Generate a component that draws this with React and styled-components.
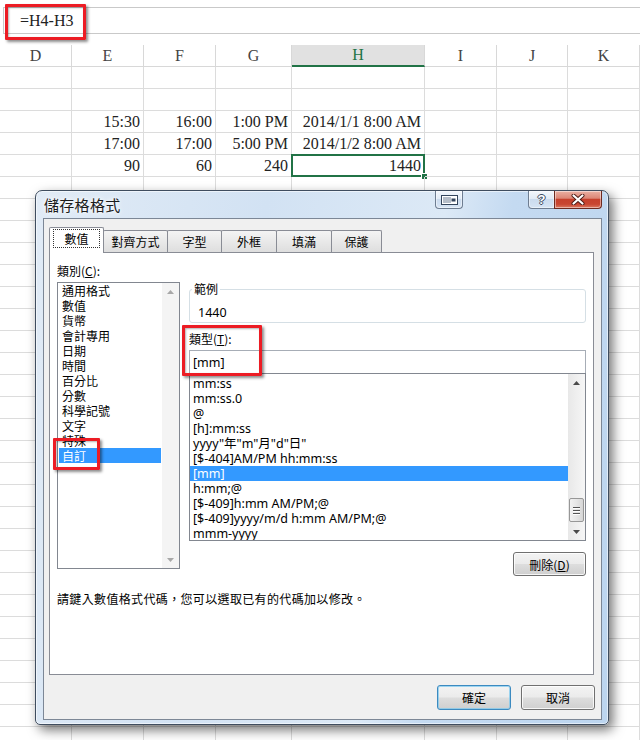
import React from 'react';
import styled, { createGlobalStyle } from 'styled-components';

const CJK = `"Noto Sans CJK TC", "Noto Sans", sans-serif`;
const LATIN = `"Noto Sans", "Noto Sans CJK TC", sans-serif`;
const SERIF = `"Liberation Serif", "Times New Roman", serif`;

const Global = createGlobalStyle`
  html, body { margin: 0; padding: 0; background: #fff; }
  body { width: 640px; height: 740px; overflow: hidden; }
`;

const Page = styled.div`
  position: relative;
  width: 640px;
  height: 740px;
  overflow: hidden;
  background: #fff;
`;

/* ---------- spreadsheet ---------- */
const FormulaBar = styled.div`
  margin: 7px 0 0 3px;
  height: 27px;
  box-sizing: border-box;
  border-top: 1px solid #c9c9c9;
  border-bottom: 1px solid #c9c9c9;
  border-left: 1px solid #c9c9c9;
  display: flex;
  align-items: center;
  padding-left: 16px;
  font-family: ${SERIF};
  font-size: 16px;
  color: #222;
`;

const Sheet = styled.div`
  margin-top: 11px;
  display: grid;
  grid-template-columns: 72px 72px 72px 76px 133px 72px 71px 72px;
  grid-auto-rows: 22px;
  font-family: ${SERIF};
  font-size: 16px;
`;

const HeadCell = styled.div`
  box-sizing: border-box;
  border-right: 1px solid #d8d8d8;
  border-bottom: ${p => (p.$active ? '2px solid #217346' : '1px solid #d8d8d8')};
  background: ${p => (p.$active ? '#e1e1e1' : '#fff')};
  color: ${p => (p.$active ? '#217346' : '#444')};
  display: flex;
  align-items: center;
  justify-content: center;
`;

const Cell = styled.div`
  position: relative;
  box-sizing: border-box;
  border-right: 1px solid #dcdcdc;
  border-bottom: 1px solid #dcdcdc;
  text-align: right;
  padding-right: 3px;
  line-height: 21px;
  color: #222;
  white-space: nowrap;
  ${p =>
    p.$selected &&
    `
    &::before {
      content: '';
      position: absolute;
      left: -1px; top: -1px; right: -1px; bottom: -1px;
      border: 2px solid #217346;
    }
    &::after {
      content: '';
      position: absolute;
      right: -4px; bottom: -4px;
      width: 5px; height: 5px;
      background: #217346;
      border: 1px solid #fff;
    }
  `}
`;

/* ---------- dialog ---------- */
const Dialog = styled.div`
  position: absolute;
  left: 35px;
  top: 190px;
  width: 574px;
  height: 535px;
  box-sizing: border-box;
  z-index: 2;
  border: 1px solid #3f4d5f;
  border-radius: 7px 7px 5px 5px;
  background: linear-gradient(100deg, #e1ebf6 0%, #d2e2f3 35%, #dce9f6 62%, #c4daf1 72%, #bcd5ef 100%);
  box-shadow: 4px 5px 12px rgba(0, 0, 0, 0.55), inset 0 0 0 1px rgba(255, 255, 255, 0.55);
  padding: 0 6px 4px 7px;
  display: flex;
  flex-direction: column;
`;

const TitleBar = styled.div`
  height: 27px;
  display: flex;
  align-items: flex-start;
`;

const Title = styled.div`
  padding-left: 1px;
  line-height: 27px;
  font-family: ${CJK};
  font-size: 15px;
  letter-spacing: 0.3px;
  color: #1b1b1b;
  text-shadow: 0 0 6px #fff, 0 0 3px #fff;
`;

const CapButtons = styled.div`
  margin-left: auto;
  display: flex;
  align-items: flex-start;
`;

const CapBtn = styled.div`
  box-sizing: border-box;
  width: ${p => p.$w}px;
  height: 18px;
  margin-left: ${p => p.$ml || 0}px;
  display: flex;
  align-items: center;
  justify-content: center;
  border: 1px solid ${p => (p.$close ? '#6d2a20' : '#6e7d91')};
  border-top: none;
  border-radius: ${p => p.$r};
  background: ${p =>
    p.$close
      ? 'linear-gradient(#eab0a3 0%, #dc8676 42%, #c6402c 50%, #c84631 78%, #dc7a62 100%)'
      : 'linear-gradient(#f3f7fc 0%, #e1ebf6 45%, #cbdbee 50%, #d6e4f4 100%)'};
  box-shadow: inset 0 0 0 1px rgba(255, 255, 255, 0.45);
`;

const HelpGlyph = styled.span`
  font-family: "Liberation Sans", sans-serif;
  font-weight: bold;
  font-size: 13px;
  color: #fff;
  text-shadow: 1px 0 #3a4b63, -1px 0 #3a4b63, 0 1px #3a4b63, 0 -1px #3a4b63;
`;

const Client = styled.div`
  flex: 1;
  box-sizing: border-box;
  border: 1px solid #7c8796;
  background: #f0f0f0;
  padding: 8px 7px 0 5px;
  display: flex;
  flex-direction: column;
`;

const TabRow = styled.div`
  height: 25px;
  display: flex;
  align-items: flex-end;
  font-family: ${CJK};
  font-size: 12px;
  color: #000;
`;

const Tab = styled.div`
  box-sizing: border-box;
  width: ${p => p.$w}px;
  height: ${p => (p.$active ? 26 : 22)}px;
  margin-left: ${p => (p.$first ? 0 : -1)}px;
  margin-bottom: ${p => (p.$active ? -1 : 0)}px;
  position: relative;
  z-index: ${p => (p.$active ? 1 : 0)};
  border: 1px solid #898c95;
  border-bottom: none;
  border-radius: 2px 2px 0 0;
  background: ${p => (p.$active ? '#fff' : 'linear-gradient(#f4f4f4, #e9e9e9 50%, #dedede)')};
  display: flex;
  align-items: center;
  justify-content: center;
  padding: ${p => (p.$active ? '0 3px 4px' : '0')};
  line-height: 15px;
`;

const FocusBox = styled.div`
  flex: 1;
  box-sizing: border-box;
  border: 1px dotted #333;
  padding: 1px 0;
  text-align: center;
`;

const Panel = styled.div`
  height: 423px;
  box-sizing: border-box;
  border: 1px solid #898c95;
  background: #fff;
  padding: 10px 7px 0 7px;
  font-family: ${CJK};
  font-size: 12px;
  color: #000;
`;

const PanelGrid = styled.div`
  display: grid;
  grid-template-columns: 123px 397px;
  column-gap: 9px;
`;

const Column = styled.div`
  display: flex;
  flex-direction: column;
`;

const Label = styled.div`
  line-height: 15px;
  margin-top: ${p => p.$mt || 0}px;
`;

const U = styled.span`
  text-decoration: underline;
  text-underline-offset: 1px;
`;

const ListBox = styled.div`
  margin-top: ${p => p.$mt || 0}px;
  height: ${p => p.$h}px;
  box-sizing: border-box;
  border: 1px solid #828790;
  background: #fff;
  display: flex;
  overflow: hidden;
`;

const Items = styled.div`
  flex: 1;
  padding-top: ${p => p.$pt}px;
  overflow: hidden;
`;

const Item = styled.div`
  height: 15px;
  line-height: 15px;
  padding-left: ${p => p.$pl}px;
  margin: ${p => p.$m};
  white-space: nowrap;
  overflow: hidden;
  font-family: ${p => (p.$latin ? LATIN : CJK)};
  font-size: ${p => (p.$latin ? '12.5px' : '12px')};
  background: ${p => (p.$selected ? '#3399ff' : 'transparent')};
  color: ${p => (p.$selected ? '#fff' : '#000')};
`;

const ScrollBar = styled.div`
  width: 17px;
  display: flex;
  flex-direction: column;
  background: ${p => (p.$disabled ? '#f4f4f4' : 'linear-gradient(90deg, #e8e8e8, #f6f6f6)')};
`;

const ArrowBox = styled.div`
  height: 17px;
  display: flex;
  align-items: center;
  justify-content: center;
`;

const Track = styled.div`
  flex: 1;
  display: flex;
  flex-direction: column;
  align-items: center;
`;

const Thumb = styled.div`
  width: 15px;
  height: 24px;
  box-sizing: border-box;
  border: 1px solid #979797;
  border-radius: 2px;
  background: linear-gradient(90deg, #f2f2f2, #e6e6e6 50%, #d6d6d6);
  display: flex;
  flex-direction: column;
  align-items: center;
  justify-content: center;
  gap: 2px;
`;

const Grip = styled.div`
  width: 7px;
  height: 1px;
  background: #555;
  box-shadow: 0 1px 0 #fff;
`;

const GroupBox = styled.div`
  position: relative;
  margin-top: 26px;
  border: 1px solid #d5dfe5;
  border-radius: 3px;
  padding: 15px 8px 2px 8px;
  line-height: 15px;
  font-family: ${LATIN};
  font-size: 12.5px;
`;

const Legend = styled.span`
  position: absolute;
  left: 2px;
  top: -9px;
  padding: 0 2px;
  background: #fff;
  line-height: 15px;
  font-family: ${CJK};
  font-size: 12px;
`;

const TextInput = styled.div`
  margin-top: 4px;
  height: 24px;
  box-sizing: border-box;
  border: 1px solid #a7adb6;
  padding-left: 3px;
  display: flex;
  align-items: center;
  font-family: ${LATIN};
  font-size: 12.5px;
  background: #fff;
`;

const Button = styled.button`
  box-sizing: border-box;
  width: ${p => p.$w}px;
  height: ${p => p.$h}px;
  margin-top: ${p => p.$mt || 0}px;
  align-self: ${p => p.$self || 'auto'};
  padding: 0;
  border: 1px solid ${p => (p.$default ? '#3c8ac0' : '#707070')};
  border-radius: 3px;
  background: linear-gradient(#f3f3f3 0%, #ebebeb 48%, #dddddd 52%, #cfcfcf 100%);
  box-shadow: inset 0 0 0 1px ${p => (p.$default ? 'rgba(120, 200, 240, 0.7)' : 'rgba(255, 255, 255, 0.8)')};
  font-family: ${CJK};
  font-size: 12px;
  color: #000;
`;

const Hint = styled.div`
  margin-top: 15px;
  line-height: 16px;
  letter-spacing: 0.35px;
`;

const Footer = styled.div`
  margin: 10px -1px 0 0;
  display: flex;
  justify-content: flex-end;
  gap: 10px;
`;

const Callout = styled.div`
  position: absolute;
  left: ${p => p.$x}px;
  top: ${p => p.$y}px;
  width: ${p => p.$w}px;
  height: ${p => p.$h}px;
  box-sizing: border-box;
  border: 3px solid #ec1c24;
  border-radius: 1px;
  box-shadow: 2px 2px 3px rgba(0, 0, 0, 0.45), inset 1px 1px 2px rgba(0, 0, 0, 0.3);
  z-index: 5;
  pointer-events: none;
`;

/* ---------- icons ---------- */
const UpArrow = ({ color = '#4a4a4a' }) => (
  <svg width="7" height="4" viewBox="0 0 7 4">
    <path d="M0 4 L3.5 0 L7 4 Z" fill={color} />
  </svg>
);
const DownArrow = ({ color = '#4a4a4a' }) => (
  <svg width="7" height="4" viewBox="0 0 7 4">
    <path d="M0 0 L3.5 4 L7 0 Z" fill={color} />
  </svg>
);
const CloseX = () => (
  <svg width="14" height="11" viewBox="0 0 14 11">
    <path d="M2.5 1.5 L11.5 9.5 M11.5 1.5 L2.5 9.5" stroke="#4a1a14" strokeWidth="4" strokeLinecap="round" />
    <path d="M2.5 1.5 L11.5 9.5 M11.5 1.5 L2.5 9.5" stroke="#fff" strokeWidth="2.2" strokeLinecap="round" />
  </svg>
);
const CollapseIcon = () => (
  <svg width="17" height="10" viewBox="0 0 17 10">
    <rect x="0.5" y="0.5" width="16" height="9" fill="#fff" stroke="#34455c" />
    <path d="M3 2 V8 M5 2 V8 M7 2 V8 M9 2 V8" stroke="#6d7d92" strokeWidth="1" />
    <rect x="10.5" y="3.5" width="4" height="3" fill="#34455c" />
  </svg>
);

/* ---------- data ---------- */
const COLS = ['D', 'E', 'F', 'G', 'H', 'I', 'J', 'K'];
const DATA = [
  [],
  [],
  ['', '15:30', '16:00', '1:00 PM', '2014/1/1 8:00 AM'],
  ['', '17:00', '17:00', '5:00 PM', '2014/1/2 8:00 AM'],
  ['', '90', '60', '240', '1440'],
];
const ROWS = 31;

const TABS = [
  ['數值', 55],
  ['對齊方式', 65],
  ['字型', 55],
  ['外框', 56],
  ['填滿', 56],
  ['保護', 51],
];

const CATEGORIES = ['通用格式', '數值', '貨幣', '會計專用', '日期', '時間', '百分比', '分數', '科學記號', '文字', '特殊', '自訂'];
const FORMATS = [
  'mm:ss',
  'mm:ss.0',
  '@',
  '[h]:mm:ss',
  'yyyy"年"m"月"d"日"',
  '[$-404]AM/PM hh:mm:ss',
  '[mm]',
  'h:mm;@',
  '[$-409]h:mm AM/PM;@',
  '[$-409]yyyy/m/d h:mm AM/PM;@',
  'mmm-yyyy',
];

export default function App() {
  const cells = [];
  for (let r = 0; r < ROWS; r++) {
    for (let c = 0; c < COLS.length; c++) {
      cells.push(
        <Cell key={`${r}-${c}`} $selected={r === 4 && c === 4}>
          {(DATA[r] && DATA[r][c]) || ''}
        </Cell>
      );
    }
  }

  return (
    <Page lang="zh-TW">
      <Global />
      <FormulaBar>=H4-H3</FormulaBar>
      <Sheet>
        {COLS.map(c => (
          <HeadCell key={c} $active={c === 'H'}>
            {c}
          </HeadCell>
        ))}
        {cells}
      </Sheet>

      <Dialog>
        <TitleBar>
          <Title>儲存格格式</Title>
          <CapButtons>
            <CapBtn $w={28} $r="0 0 4px 4px">
              <CollapseIcon />
            </CapBtn>
            <CapBtn $w={27} $ml={65} $r="0 0 0 4px">
              <HelpGlyph>?</HelpGlyph>
            </CapBtn>
            <CapBtn $w={48} $ml={-1} $r="0 0 4px 0" $close>
              <CloseX />
            </CapBtn>
          </CapButtons>
        </TitleBar>

        <Client>
          <TabRow>
            {TABS.map(([t, w], i) => (
              <Tab key={t} $w={w} $first={i === 0} $active={i === 0}>
                {i === 0 ? <FocusBox>{t}</FocusBox> : t}
              </Tab>
            ))}
          </TabRow>

          <Panel>
            <PanelGrid>
              <Column>
                <Label>
                  類別(<U>C</U>):
                </Label>
                <ListBox $mt={4} $h={287}>
                  <Items $pt={0}>
                    {CATEGORIES.map((c, i) => (
                      <Item key={c} $pl={3} $m="0 1px" $selected={i === 11}>
                        {c}
                      </Item>
                    ))}
                  </Items>
                  <ScrollBar $disabled>
                    <ArrowBox>
                      <UpArrow color="#a8a8a8" />
                    </ArrowBox>
                    <Track />
                    <ArrowBox>
                      <DownArrow color="#a8a8a8" />
                    </ArrowBox>
                  </ScrollBar>
                </ListBox>
              </Column>

              <Column>
                <GroupBox>
                  <Legend>範例</Legend>
                  1440
                </GroupBox>
                <Label $mt={8}>
                  類型(<U>T</U>):
                </Label>
                <TextInput>[mm]</TextInput>
                <ListBox $mt={-1} $h={168}>
                  <Items $pt={1.5}>
                    {FORMATS.map((f, i) => (
                      <Item key={f} $latin $pl={3} $m="0" $selected={i === 6}>
                        {f}
                      </Item>
                    ))}
                  </Items>
                  <ScrollBar>
                    <ArrowBox>
                      <UpArrow />
                    </ArrowBox>
                    <Track>
                      <Thumb style={{ marginTop: 107 }}>
                        <Grip />
                        <Grip />
                        <Grip />
                      </Thumb>
                    </Track>
                    <ArrowBox>
                      <DownArrow />
                    </ArrowBox>
                  </ScrollBar>
                </ListBox>
                <Button $w={73} $h={24} $mt={11} $self="flex-end">
                  刪除(<U>D</U>)
                </Button>
              </Column>
            </PanelGrid>
            <Hint>請鍵入數值格式代碼，您可以選取已有的代碼加以修改。</Hint>
          </Panel>

          <Footer>
            <Button $w={74} $h={25} $default>
              確定
            </Button>
            <Button $w={74} $h={25}>
              取消
            </Button>
          </Footer>
        </Client>
      </Dialog>

      <Callout $x={5} $y={4} $w={81} $h={36} />
      <Callout $x={182} $y={325} $w={80} $h={51} />
      <Callout $x={53} $y={438} $w={47} $h={32} />
    </Page>
  );
}
